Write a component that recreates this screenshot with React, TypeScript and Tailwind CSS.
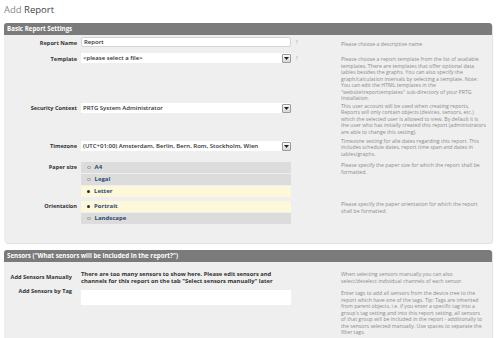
import React from "react";

const help = "w-[150px] shrink-0 text-[5.2px] leading-[6.5px] text-[#8c8c8c] whitespace-nowrap";
const label = "w-[73px] shrink-0 text-right text-[5.6px] font-bold text-[#333]";
const field = "ml-[4px] w-[210px] shrink-0";

function Lines({ lines }: { lines: string[] }) {
  return (
    <>
      {lines.map((l, i) => (
        <div key={i}>{l}</div>
      ))}
    </>
  );
}

function DropBtn() {
  return (
    <div className="w-[9px] h-[9px] border border-[#9a9a9a] rounded-[1px] bg-gradient-to-b from-[#fafafa] to-[#d8d8d8] flex items-center justify-center">
      <svg width="5" height="3" viewBox="0 0 5 3">
        <path d="M0 0 H5 L2.5 3 Z" fill="#222" />
      </svg>
    </div>
  );
}

function Radio({ text, selected }: { text: string; selected?: boolean }) {
  return (
    <div
      className={`h-[11px] flex items-center pl-[6px] ${selected ? "bg-[#fdf8d9]" : "bg-[#dcdcdc]"}`}
    >
      {selected ? (
        <div className="w-[3px] h-[3px] rounded-full bg-[#2a2a2a]" />
      ) : (
        <div className="w-[3.5px] h-[3.5px] rounded-full border-[0.6px] border-[#9a9a9a]" />
      )}
      <span className="ml-[4px] text-[6px] font-bold text-[#2c4a6e]">{text}</span>
    </div>
  );
}

export default function App() {
  return (
    <div className="w-[498px] h-[338px] bg-white overflow-hidden font-['Open_Sans',sans-serif]">
      <div className="pl-[4px] pt-[3px] h-[23px] text-[9.5px] leading-[14px]">
        <span className="text-[#8a8a8a]">Add </span>
        <span className="text-[#444]">Report</span>
      </div>

      {/* Panel 1 */}
      <div className="ml-[4px] w-[488px] h-[220px] bg-[#efefef] rounded-[3px] shadow-[1px_1px_1px_rgba(0,0,0,0.12)]">
        <div className="h-[12px] bg-[#7b7b7b] rounded-t-[3px] pl-[3px] flex items-center text-[6.2px] font-bold text-white">
          Basic Report Settings
        </div>

        {/* Report Name */}
        <div className="h-[17px] flex items-start">
          <div className={`${label} mt-[4px]`}>Report Name</div>
          <div className={`${field} mt-[2px] h-[10px] bg-white border border-[#d4d4d4] rounded-[2px] flex items-center pl-[2px] text-[6px] font-semibold text-[#333]`}>
            Report
          </div>
          <div className="w-[50px] shrink-0 pl-[5px] mt-[3px] text-[6px] text-[#999]">!</div>
          <div className={`${help} mt-[6px]`}>Please choose a descriptive name</div>
        </div>

        {/* Template */}
        <div className="h-[50px] flex items-start">
          <div className={`${label} mt-[3px]`}>Template</div>
          <div className={`${field} mt-[1px] h-[10px] bg-white flex items-center pl-[2px] justify-between text-[6px] font-semibold text-[#333]`}>
            <span>&lt;please select a file&gt;</span>
            <DropBtn />
          </div>
          <div className="w-[50px] shrink-0 pl-[5px] mt-[2px] text-[6px] text-[#999]">!</div>
          <div className={`${help} mt-[4px]`}>
            <Lines
              lines={[
                "Please choose a report template from the list of available",
                "templates. There are templates that offer optional data",
                "tables besides the graphs. You can also specify the",
                "graph/calculation intervals by selecting a template. Note:",
                "You can edit the HTML templates in the",
                "\"website\\reporttemplates\" sub-directory of your PRTG",
                "Installation.",
              ]}
            />
          </div>
        </div>

        {/* Security Context */}
        <div className="h-[34px] flex items-start">
          <div className={`${label} mt-[2px]`}>Security Context</div>
          <div className={`${field} mt-[1px] h-[10px] bg-white flex items-center pl-[2px] justify-between text-[6px] font-semibold text-[#333]`}>
            <span>PRTG System Administrator</span>
            <DropBtn />
          </div>
          <div className="w-[50px] shrink-0" />
          <div className={`${help} mt-[0.5px]`}>
            <Lines
              lines={[
                "This user account will be used when creating reports.",
                "Reports will only contain objects (devices, sensors, etc.)",
                "which the selected user is allowed to view. By default it is",
                "the user who has initially created this report (administrators",
                "are able to change this setting).",
              ]}
            />
          </div>
        </div>

        {/* Timezone */}
        <div className="h-[24px] flex items-start">
          <div className={`${label} mt-[6px]`}>Timezone</div>
          <div className={`${field} mt-[5px] h-[10px] bg-white flex items-center pl-[2px] justify-between text-[6px] font-semibold text-[#333]`}>
            <span>(UTC+01:00) Amsterdam, Berlin, Bern, Rom, Stockholm, Wien</span>
            <DropBtn />
          </div>
          <div className="w-[50px] shrink-0" />
          <div className={`${help} mt-[1.5px]`}>
            <Lines
              lines={[
                "Timezone setting for alle dates regarding this report. This",
                "includes schedule dates, report time span and dates in",
                "tables/graphs.",
              ]}
            />
          </div>
        </div>

        {/* Paper size */}
        <div className="h-[39px] flex items-start">
          <div className={`${label} mt-[3px]`}>Paper size</div>
          <div className={`${field} mt-[2px] flex flex-col gap-[1px]`}>
            <Radio text="A4" />
            <Radio text="Legal" />
            <Radio text="Letter" selected />
          </div>
          <div className="w-[50px] shrink-0" />
          <div className={`${help} mt-[2px]`}>
            <Lines
              lines={[
                "Please specify the paper size for which the report shall be",
                "formatted.",
              ]}
            />
          </div>
        </div>

        {/* Orientation */}
        <div className="h-[27px] flex items-start">
          <div className={`${label} mt-[3px]`}>Orientation</div>
          <div className={`${field} mt-[2px] flex flex-col gap-[1px]`}>
            <Radio text="Portrait" selected />
            <Radio text="Landscape" />
          </div>
          <div className="w-[50px] shrink-0" />
          <div className={`${help} mt-[2px]`}>
            <Lines
              lines={[
                "Please specify the paper orientation for which the report",
                "shall be formatted.",
              ]}
            />
          </div>
        </div>
      </div>

      {/* Panel 2 */}
      <div className="ml-[4px] mt-[7px] w-[488px] h-[100px] bg-[#efefef] rounded-[3px] shadow-[1px_1px_1px_rgba(0,0,0,0.12)]">
        <div className="h-[12px] bg-[#7b7b7b] rounded-t-[3px] pl-[3px] flex items-center text-[6.2px] font-bold text-white">
          Sensors ("What sensors will be included in the report?")
        </div>

        <div className="h-[27px] flex items-start pt-[9px]">
          <div className={`${label} !w-[68px] mt-[2px]`}>Add Sensors Manually</div>
          <div className="ml-[9px] mt-[0px] w-[210px] shrink-0 text-[5.8px] leading-[6.6px] font-bold text-[#333] whitespace-nowrap">
            <div>There are too many sensors to show here. Please edit sensors and</div>
            <div>channels for this report on the tab "Select sensors manually" later</div>
          </div>
          <div className="w-[50px] shrink-0" />
          <div className={help}>
            <Lines
              lines={[
                "When selecting sensors manually you can also",
                "select/deselect individual channels of each sensor.",
              ]}
            />
          </div>
        </div>

        <div className="flex items-start">
          <div className={`${label} !w-[68px] mt-[-2px]`}>Add Sensors by Tag</div>
          <div className="ml-[9px] mt-[1px] w-[210px] shrink-0 h-[15px] bg-white" />
          <div className="w-[50px] shrink-0" />
          <div className={`${help} mt-[1px]`}>
            <Lines
              lines={[
                "Enter tags to add all sensors from the device tree to the",
                "report which have one of the tags. Tip: Tags are inherited",
                "from parent objects, i.e. if you enter a specific tag into a",
                "group's tag setting and into this report setting, all sensors",
                "of that group will be included in the report - additionally to",
                "the sensors selected manually. Use spaces to separate the",
                "filter tags.",
              ]}
            />
          </div>
        </div>
      </div>
    </div>
  );
}
